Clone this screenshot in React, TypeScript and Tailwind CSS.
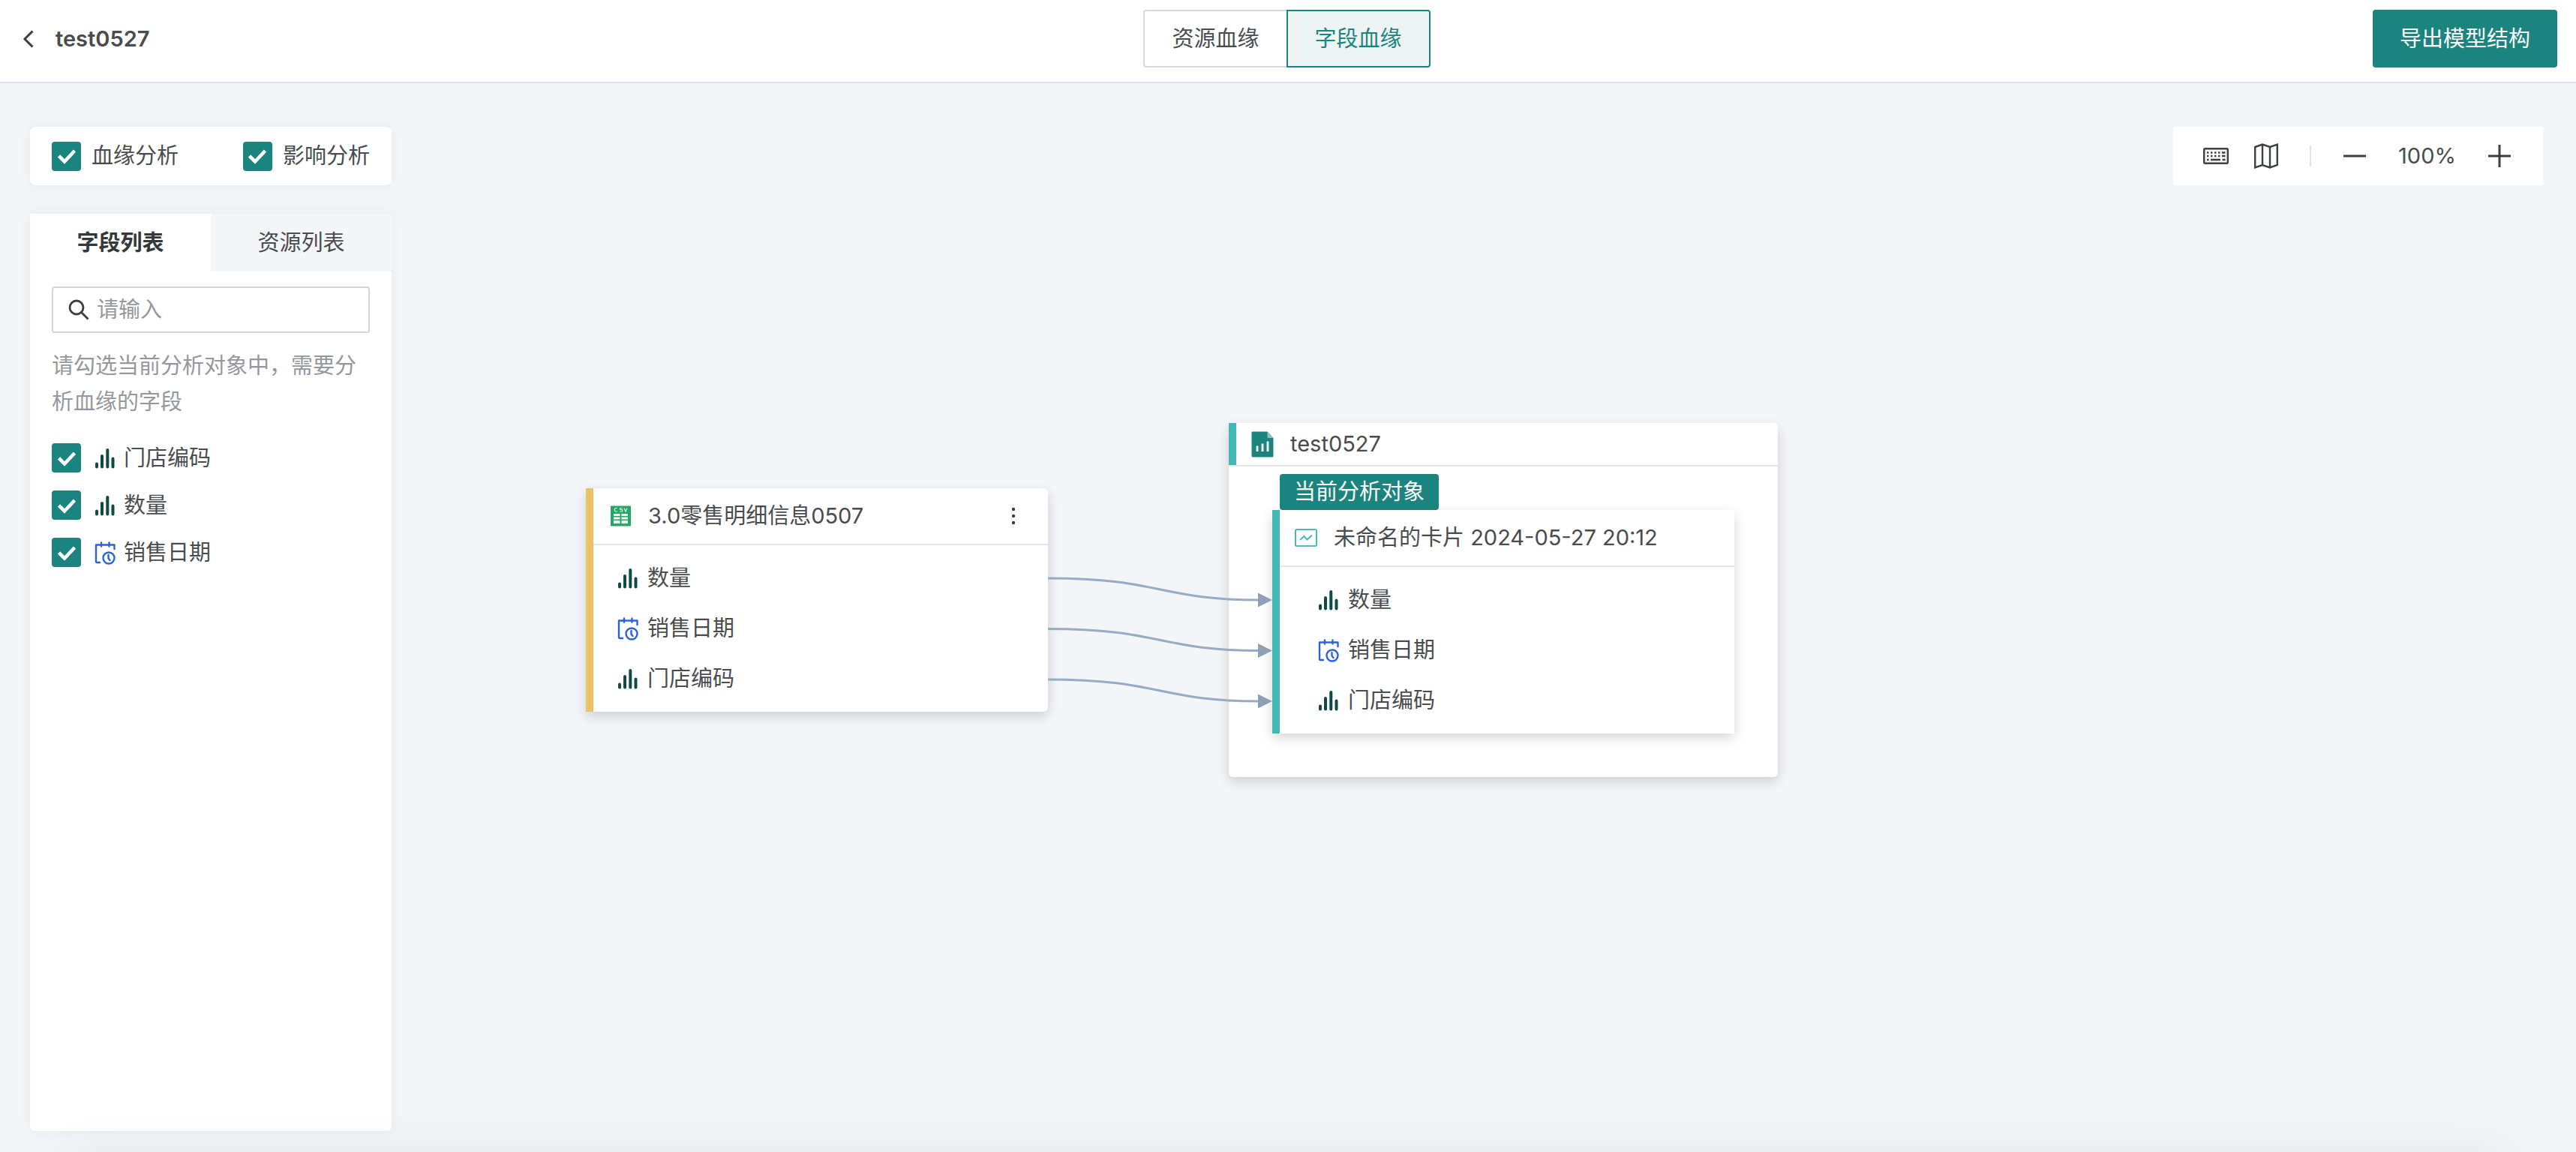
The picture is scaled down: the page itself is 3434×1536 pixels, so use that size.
import { useState } from "react"

type FieldType = 'number' | 'date';

type Field = {
    name: string;
    type: FieldType;
};

const sidebarFields: Field[] = [
    { name: '门店编码', type: 'number' },
    { name: '数量', type: 'number' },
    { name: '销售日期', type: 'date' },
];

const nodeFields: Field[] = [
    { name: '数量', type: 'number' },
    { name: '销售日期', type: 'date' },
    { name: '门店编码', type: 'number' },
];

function BarsIcon() {
    return (
        <svg className="h-7 w-7 shrink-0" viewBox="0 0 28 28" stroke="#0f4a49" strokeWidth="4" strokeLinecap="round" aria-hidden="true">
            <path d="M3 21.5v4M10 11v14.5M17.300 3v22.500M24.500 14.500v11" />
        </svg>
    );
}

function DateIcon() {
    return (
        <svg className="h-7 w-7 shrink-0 overflow-visible" viewBox="0 0 28 28" fill="none" stroke="#2b62d9" strokeWidth="2.400" strokeLinecap="round" strokeLinejoin="round" aria-hidden="true">
            <path d="M7 27H3.500Q2 27 2 25.500V3.500H26.500V9M9 0.500v5M19.500 0.500v5" />
            <circle cx="19" cy="21" r="7.500" />
            <path d="M18.500 17v4.500l2 2.500" />
        </svg>
    );
}

function CsvIcon() {
    return (
        <svg className="h-7 w-7 shrink-0" viewBox="0 0 28 28" aria-hidden="true">
            <rect width="27" height="27" x="0" y="0.500" fill="#2aa568" />
            <path d="M9 3.500H6.500Q5.500 3.500 5.500 5V6.500Q5.500 8 6.500 8H9M15.500 3.500H12.500V5.500H15.500V8H12M18 3.500L20 8L22 3.500" fill="none" stroke="#d9f2e5" strokeWidth="1.200" />
            <path d="M4 11h8.500v3H4zM14.500 11H23v3h-8.500zM4 15.500h8.500v3H4zM14.500 15.500H23v3h-8.500zM4 20h8.500v4H4zM14.500 20H23v4h-8.500z" fill="#f1fbf5" />
        </svg>
    );
}

function ReportIcon() {
    return (
        <svg className="h-[35px] w-[30px] shrink-0" viewBox="0 0 30 35" aria-hidden="true">
            <path d="M1.500 0.500H21.500L29.500 9V33Q29.500 34.500 28 34.500H2Q0.500 34.500 0.500 33V1.500Q0.500 0.500 1.500 0.500Z" fill="#1b847e" />
            <path d="M21.500 0.500L29.500 9H23Q21.500 9 21.500 7.500Z" fill="#8dc1be" />
            <path d="M8 19.500v7.500M15 16.500v10.500M22 13.500v13.500" stroke="#fff" strokeWidth="2.800" />
        </svg>
    );
}

function CardIcon() {
    return (
        <svg className="h-6 w-[30px] shrink-0" viewBox="0 0 30 24" fill="none" stroke="#4dbab8" strokeWidth="2" aria-hidden="true">
            <rect x="1" y="1" width="28" height="22" rx="1.500" />
            <path d="M7 15L12.500 10L16.500 14.500L23 8.500" />
        </svg>
    );
}

function KeyboardIcon() {
    return (
        <svg className="h-[22px] w-[34px]" viewBox="0 0 34 22" fill="none" stroke="#3a3f42" aria-hidden="true">
            <rect x="1.200" y="1.200" width="31.600" height="19.600" rx="1.500" strokeWidth="2.400" />
            <path d="M5 6.500H24M5 11H24" strokeWidth="2.400" strokeDasharray="2.400 2.600" />
            <path d="M25 6.500H29.500M25 11H29.500M5 16H7.500M10 16H23M25.500 16H29.500" strokeWidth="2.400" />
        </svg>
    );
}

function MapIcon() {
    return (
        <svg className="h-[34px] w-[32px]" viewBox="0 0 32 34" fill="none" stroke="#3a3f42" strokeWidth="2.400" strokeLinejoin="miter" aria-hidden="true">
            <path d="M1.200 5L11 1.500L21 5L30.800 1.700V29L21 32.500L11 29L1.200 32.300ZM11 1.500V29M21 5V32.500" />
        </svg>
    );
}

function FieldIcon({ type }: { type: FieldType }) {
    return type === 'date' ? <DateIcon /> : <BarsIcon />;
}

function Checkbox({ checked, onChange }: { checked: boolean; onChange: () => void }) {
    return (
        <span className="grid h-[39px] w-[39px] shrink-0 place-items-center">
            <input
                type="checkbox"
                className="col-start-1 row-start-1 h-full w-full appearance-none rounded border-2 border-[#c9ccd4] bg-white checked:border-[#1b847e] checked:bg-[#1b847e]"
                checked={checked}
                onChange={onChange}
            />
            {checked && (
                <svg className="pointer-events-none col-start-1 row-start-1 h-6 w-6" viewBox="0 0 24 24" fill="none" stroke="#fff" strokeWidth="4.600" aria-hidden="true">
                    <path d="M1.500 12L9 19.500L22.500 5" />
                </svg>
            )}
        </span>
    );
}

function FieldRows() {
    return (
        <ul className="flex flex-col gap-[19px] py-5">
            {nodeFields.map((field) => (
                <li key={field.name} className="flex h-12 items-center gap-3">
                    <FieldIcon type={field.type} />
                    <span>{field.name}</span>
                </li>
            ))}
        </ul>
    );
}

export default function App() {
    const [activeView, setActiveView] = useState('field');
    const [activeTab, setActiveTab] = useState('field');
    const [lineage, setLineage] = useState(true);
    const [impact, setImpact] = useState(true);
    const [keyword, setKeyword] = useState('');
    const [zoom, setZoom] = useState(100);
    const [selected, setSelected] = useState<string[]>(sidebarFields.map((f) => f.name));

    const toggleField = (name: string) => {
        setSelected((prev) =>
            prev.includes(name) ? prev.filter((n) => n !== name) : [...prev, name]
        );
    };

    const visibleFields = sidebarFields.filter((f) => f.name.includes(keyword));

    return (
        <div className="flex min-h-screen flex-col bg-[#f3f5f9] font-[Inter,'Noto_Sans_CJK_SC',sans-serif] text-[29px] leading-[48px] font-normal text-[#484c4e]">
            <header className="grid grid-cols-[1fr_auto_1fr] items-center border-b-2 border-[#e0e4ea] bg-white pt-[13px] pr-[25px] pb-[19px] pl-[22px]">
                <div className="flex items-center gap-5">
                    <button type="button" className="px-2" aria-label="返回">
                        <svg className="h-6 w-4" viewBox="0 0 16 24" fill="none" stroke="#3a3f42" strokeWidth="3" aria-hidden="true">
                            <path d="M13.500 1.500L3 12L13.500 22.500" />
                        </svg>
                    </button>
                    <h1 className="font-semibold">test0527</h1>
                </div>

                <div className="flex">
                    <button
                        type="button"
                        className={
                            activeView === 'resource'
                                ? 'h-[77px] rounded-l border-2 border-[#1b847e] bg-[#eef3f4] px-9 text-[#1b847e]'
                                : 'h-[77px] rounded-l border-2 border-r-0 border-[#d5d8de] bg-white px-9'
                        }
                        onClick={() => setActiveView('resource')}>
                        资源血缘
                    </button>
                    <button
                        type="button"
                        className={
                            activeView === 'field'
                                ? 'h-[77px] rounded-r border-2 border-[#1b847e] bg-[#eef3f4] px-9 text-[#1b847e]'
                                : 'h-[77px] rounded-r border-2 border-l-0 border-[#d5d8de] bg-white px-9'
                        }
                        onClick={() => setActiveView('field')}>
                        字段血缘
                    </button>
                </div>

                <button type="button" className="h-[77px] justify-self-end rounded bg-[#1b847e] px-9 text-white">
                    导出模型结构
                </button>
            </header>

            <main className="relative flex flex-1 items-start justify-between overflow-hidden pt-[58px] pr-[44px] pb-7 pl-10">
                {/* lineage canvas */}
                <div className="absolute inset-0">
                    <section className="absolute top-[540px] left-[781px] h-[298px] w-[616px] rounded-r-md border-l-[10px] border-[#eac463] bg-white shadow-[0_6px_16px_rgba(0,0,0,0.16)]">
                        <div className="flex h-[76px] items-center gap-[22px] border-b-2 border-[#e3e5e6] pr-8 pl-[23px]">
                            <CsvIcon />
                            <h2 className="flex-1">3.0零售明细信息0507</h2>
                            <button type="button" aria-label="更多">
                                <svg className="h-6 w-7" viewBox="0 0 28 24" fill="#3a3f42" aria-hidden="true">
                                    <circle cx="14" cy="3" r="2.200" />
                                    <circle cx="14" cy="12" r="2.200" />
                                    <circle cx="14" cy="21" r="2.200" />
                                </svg>
                            </button>
                        </div>
                        <div className="pl-8">
                            <FieldRows />
                        </div>
                    </section>

                    <section className="absolute top-[453px] left-[1638px] h-[472px] w-[732px] rounded-md bg-white shadow-[0_6px_16px_rgba(0,0,0,0.16)]">
                        <div className="flex h-[58px] border-b-2 border-[#e3e5e6]">
                            <div className="w-[10px] bg-[#41b7b6]" />
                            <div className="flex items-center gap-[22px] pl-5">
                                <ReportIcon />
                                <h2>test0527</h2>
                            </div>
                        </div>
                        <div className="pt-[10px] pl-[58px]">
                            <div className="ml-[10px] inline-block rounded bg-[#1b847e] px-[19px] align-top text-white">
                                当前分析对象
                            </div>
                            <article className="h-[298px] w-[616px] border-l-[10px] border-[#41b7b6] bg-white shadow-[0_6px_16px_rgba(0,0,0,0.16)]">
                                <div className="flex h-[76px] items-center gap-[22px] border-b-2 border-[#e3e5e6] pl-5">
                                    <CardIcon />
                                    <h3>未命名的卡片 2024-05-27 20:12</h3>
                                </div>
                                <div className="pl-[51px]">
                                    <FieldRows />
                                </div>
                            </article>
                        </div>
                    </section>

                    <svg className="pointer-events-none absolute top-[640px] left-[1397px] h-[210px] w-[300px]" viewBox="0 0 300 210" aria-hidden="true">
                        {nodeFields.map((field, i) => (
                            <g key={field.name} transform={`translate(0 ${i * 67.5})`}>
                                <path d="M0 20C150 20 150 49 281 49" fill="none" stroke="#97abc4" strokeWidth="3" />
                                <path d="M280 39.500L299 49L280 58.500Z" fill="#8da0b6" />
                            </g>
                        ))}
                    </svg>
                </div>

                <aside className="z-10 flex w-[482px] flex-col gap-[38px] self-stretch">
                    <div className="flex h-[78px] items-center justify-between rounded-lg bg-white px-[29px] shadow-[0_0_20px_rgba(0,0,0,0.05)]">
                        <label className="flex items-center gap-[14px]">
                            <Checkbox checked={lineage} onChange={() => setLineage(!lineage)} />
                            血缘分析
                        </label>
                        <label className="flex items-center gap-[14px]">
                            <Checkbox checked={impact} onChange={() => setImpact(!impact)} />
                            影响分析
                        </label>
                    </div>

                    <div className="flex-1 rounded-b-md bg-white shadow-[0_0_20px_rgba(0,0,0,0.05)]">
                        <div className="grid grid-cols-2" role="tablist">
                            <button
                                type="button"
                                role="tab"
                                aria-selected={activeTab === 'field'}
                                className={activeTab === 'field' ? 'h-[77px] bg-white font-bold text-[#33383a]' : 'h-[77px] bg-[#f3f5f9]'}
                                onClick={() => setActiveTab('field')}>
                                字段列表
                            </button>
                            <button
                                type="button"
                                role="tab"
                                aria-selected={activeTab === 'resource'}
                                className={activeTab === 'resource' ? 'h-[77px] bg-white font-bold text-[#33383a]' : 'h-[77px] bg-[#f3f5f9]'}
                                onClick={() => setActiveTab('resource')}>
                                资源列表
                            </button>
                        </div>

                        <div className="px-[29px] pt-5">
                            <label className="flex h-[62px] items-center gap-[10px] rounded border-2 border-[#d3d5de] pr-3 pl-5">
                                <svg className="h-7 w-7 shrink-0" viewBox="0 0 28 28" fill="none" stroke="#3a3f42" strokeWidth="2.800" aria-hidden="true">
                                    <circle cx="11" cy="11" r="9" />
                                    <path d="M17.500 17.500L26.500 26.500" />
                                </svg>
                                <input
                                    className="w-full min-w-0 bg-transparent outline-none placeholder:text-[#94979c]"
                                    value={keyword}
                                    placeholder="请输入"
                                    aria-label="搜索字段"
                                    onChange={(e) => setKeyword(e.target.value)}
                                />
                            </label>

                            <p className="mt-5 text-[#94979c]">
                                请勾选当前分析对象中，需要分析血缘的字段
                            </p>

                            <ul className="mt-[31px] flex flex-col gap-6">
                                {visibleFields.map((field) => (
                                    <li key={field.name}>
                                        <label className="flex h-[39px] items-center gap-[18px]">
                                            <Checkbox
                                                checked={selected.includes(field.name)}
                                                onChange={() => toggleField(field.name)}
                                            />
                                            <span className="flex items-center gap-[11px]">
                                                <FieldIcon type={field.type} />
                                                {field.name}
                                            </span>
                                        </label>
                                    </li>
                                ))}
                            </ul>
                        </div>
                    </div>
                </aside>

                <div className="z-10 flex h-[78px] items-center rounded bg-white pr-[43px] pl-[40px]">
                    <button type="button" aria-label="快捷键">
                        <KeyboardIcon />
                    </button>
                    <button type="button" className="ml-[34px]" aria-label="缩略图">
                        <MapIcon />
                    </button>
                    <div className="ml-[42px] h-7 w-[2px] bg-[#dfe1e5]" />
                    <button
                        type="button"
                        className="ml-[43px]"
                        aria-label="缩小"
                        onClick={() => setZoom((z) => Math.max(10, z - 10))}>
                        <svg className="h-[30px] w-[30px]" viewBox="0 0 30 30" stroke="#3a3f42" strokeWidth="3" aria-hidden="true">
                            <path d="M0 15H30" />
                        </svg>
                    </button>
                    <span className="w-[163px] text-center">{zoom}%</span>
                    <button
                        type="button"
                        aria-label="放大"
                        onClick={() => setZoom((z) => Math.min(200, z + 10))}>
                        <svg className="h-[30px] w-[30px]" viewBox="0 0 30 30" stroke="#3a3f42" strokeWidth="3" aria-hidden="true">
                            <path d="M0 15H30M15 0V30" />
                        </svg>
                    </button>
                </div>

                {/* collapsed bottom drawer, only its shadow shows */}
                <div className="pointer-events-none absolute inset-x-24 top-full z-20 h-40 shadow-[0_0_60px_rgba(0,0,0,0.08)]" />
            </main>
        </div>
    )
}
